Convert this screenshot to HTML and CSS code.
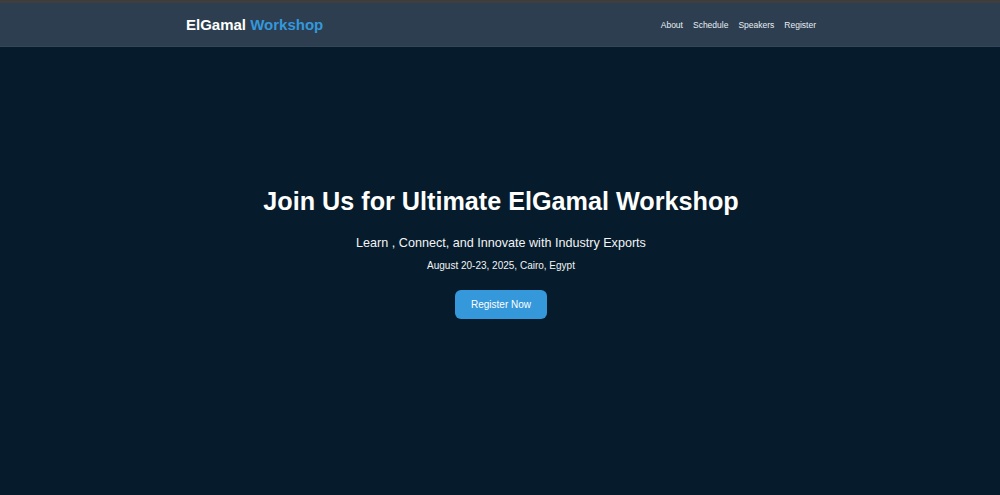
FILE: index.html
```html
<!DOCTYPE html>
<html lang="en">
<head>
<meta charset="utf-8">
<title>ElGamal Workshop</title>
<link rel="stylesheet" href="styles.css">
</head>
<body>
<header class="site-header">
  <div class="container nav-bar">
    <a class="logo" href="#">ElGamal <span class="logo-accent">Workshop</span></a>
    <nav class="nav-links">
      <a href="#about">About</a>
      <a href="#schedule">Schedule</a>
      <a href="#speakers">Speakers</a>
      <a href="#register">Register</a>
    </nav>
  </div>
</header>
<main class="hero">
  <h1 class="hero-title">Join Us for Ultimate ElGamal Workshop</h1>
  <p class="hero-sub">Learn , Connect, and Innovate with Industry Exports</p>
  <p class="hero-date">August 20-23, 2025, Cairo, Egypt</p>
  <a class="btn" href="#register">Register Now</a>
</main>
</body>
</html>
```
FILE: styles.css
```css
* { box-sizing: border-box; }
html, body { margin: 0; padding: 0; }
body {
  background: #061b2b;
  color: #ffffff;
  font-family: "Liberation Sans", Arial, sans-serif;
  height: 495px;
  overflow: hidden;
}
a { text-decoration: none; color: inherit; }
.site-header {
  background: #2c3e50;
  border-top: 3px solid #3f3d3e;
  border-bottom: 1px solid #34475a;
  height: 47px;
  padding-left: 2px;
}
.container {
  width: 630px;
  margin: 0 auto;
}
.nav-bar {
  height: 43px;
  display: flex;
  align-items: center;
  justify-content: space-between;
}
.logo {
  font-size: 15px;
  font-weight: bold;
  color: #ffffff;
}
.logo-accent { color: #3498db; }
.nav-links {
  display: flex;
  gap: 10px;
  font-size: 8.5px;
  color: #e9eef3;
}
.hero {
  display: flex;
  flex-direction: column;
  align-items: center;
  text-align: center;
  padding-top: 139px;
  padding-left: 2px;
}
.hero-title {
  margin: 0;
  font-size: 25.2px;
  line-height: 30px;
  font-weight: bold;
}
.hero-sub {
  margin: 19px 0 0;
  font-size: 12.6px;
  line-height: 16px;
  color: #f2f4f6;
}
.hero-date {
  margin: 8px 0 0;
  font-size: 10px;
  line-height: 14px;
  color: #f2f4f6;
}
.btn {
  margin-top: 17px;
  display: inline-block;
  white-space: nowrap;
  background: #3498db;
  color: #ffffff;
  font-size: 10px;
  line-height: 12px;
  padding: 8.5px 16px;
  border-radius: 6px;
  height: 29px;
}
```
